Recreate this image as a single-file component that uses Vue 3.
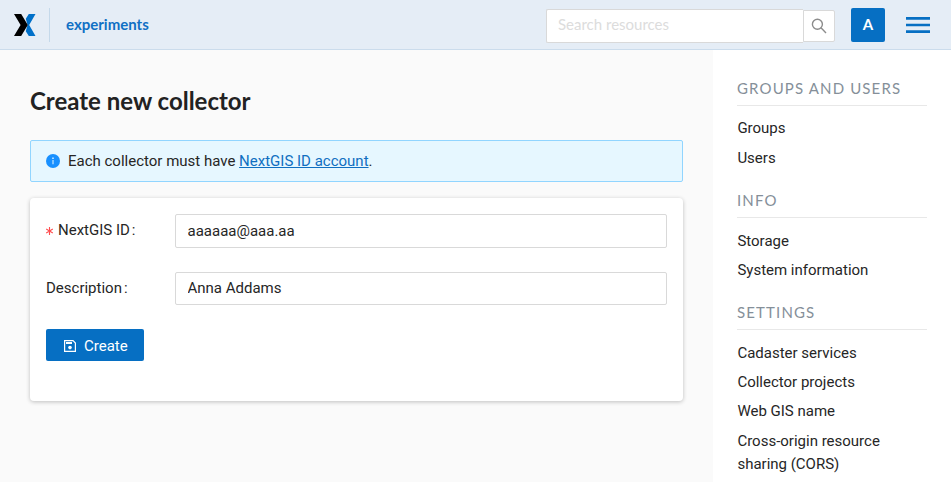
<script setup>
import { ref } from 'vue'

const nextgisId = ref('aaaaaa@aaa.aa')
const description = ref('Anna Addams')
const groups = [
  { title: 'Groups and users', items: ['Groups', 'Users'] },
  { title: 'Info', items: ['Storage', 'System information'] },
  {
    title: 'Settings',
    items: ['Cadaster services', 'Collector projects', 'Web GIS name', 'Cross-origin resource sharing (CORS)'],
  },
]
</script>

<template>
  <div class="page">
    <header class="header">
      <svg class="logo" width="22" height="22" viewBox="0 0 22 22">
        <path d="M14.8 0H21.5L15.2 11 21.5 22H14.8L11.8 17.3 13.5 11 11.8 4.7z" fill="#0070c9" />
        <path d="M0 0h7.2L13.8 11 7.2 22H0L6.6 11z" fill="#000" />
      </svg>
      <div class="divider"></div>
      <a class="site">experiments</a>
      <div class="search">
        <input class="search-input" placeholder="Search resources" />
        <button class="search-button">
          <svg width="16" height="16" viewBox="0 0 16 16" fill="none" stroke="#8c8c8c" stroke-width="1.4">
            <circle cx="6.4" cy="6.2" r="5" />
            <path d="M10 9.8L15 15" />
          </svg>
        </button>
      </div>
      <div class="avatar">A</div>
      <svg class="menu" width="24" height="16" viewBox="0 0 24 16" fill="#066fc3">
        <path d="M0 0h24v2.67H0zM0 6.67h24v2.67H0zM0 13.33h24V16H0z" />
      </svg>
    </header>
    <div class="body">
      <main class="main">
        <h1>Create new collector</h1>
        <div class="alert">
          <svg width="14" height="14" viewBox="0 0 14 14">
            <circle cx="7" cy="7" r="7" fill="#1890ff" />
            <path d="M6.5 6h1v4.3h-1zM6.3 3.6h1.4V5H6.3z" fill="#e6f7ff" />
          </svg>
          <span class="message">Each collector must have <a>NextGIS ID account</a>.</span>
        </div>
        <form class="card" @submit.prevent>
          <div class="row first">
            <label>
              <svg class="required" width="8" height="8" viewBox="0 0 8 8" stroke="#ff4d4f" stroke-width="1.1">
                <path d="M3.5 0v8M.2 2l6.6 4M6.8 2L.2 6" />
              </svg>
              NextGIS ID<span class="colon">:</span>
            </label>
            <input v-model="nextgisId" />
          </div>
          <div class="row second">
            <label>Description<span class="colon">:</span></label>
            <input v-model="description" />
          </div>
          <button class="create">
            <svg width="12" height="12" viewBox="0 0 12 12" fill="none" stroke="#fff" stroke-width="1.2">
              <path d="M.6.6h8.4l2.4 2.4v8.4H.6z" />
              <path d="M2 3h6" stroke-width="2" />
              <circle cx="6" cy="7.6" r="1.8" fill="#fff" stroke="none" />
            </svg>
            <span>Create</span>
          </button>
        </form>
      </main>
      <aside class="sidebar">
        <section v-for="group in groups" :key="group.title">
          <h2>{{ group.title }}</h2>
          <a v-for="item in group.items" :key="item">{{ item }}</a>
        </section>
      </aside>
    </div>
  </div>
</template>

<style>
body {
  background: #fafafa;
}
</style>

<style scoped>
* {
  box-sizing: border-box;
}
.page {
  height: 482px;
  overflow: hidden;
  display: flex;
  flex-direction: column;
  font: 15px/23.57px Roboto, sans-serif;
  color: #262626;
}
.header {
  flex: none;
  height: 50px;
  display: flex;
  align-items: center;
  padding: 0 21px 0 14px;
  background: #e5edf6;
  border-bottom: 1px solid #cbdcec;
}
.logo {
  margin-top: 1px;
}
.divider {
  width: 1px;
  height: 34px;
  margin: 0 16px 0 13px;
  background: #c5d9ea;
}
.site {
  margin-bottom: 2px;
  font: 700 15px/24px Lato, sans-serif;
  color: #1070c4;
}
.search {
  display: flex;
  align-items: center;
  margin-left: auto;
  margin-top: 2px;
}
.search-input {
  width: 257px;
  height: 34px;
  padding: 0 11px 4px;
  font: 15px/24px Lato, sans-serif;
  border: 1px solid #d9d9d9;
  border-right: 0;
  border-radius: 2px 0 0 2px;
  outline: none;
}
.search-input::placeholder {
  color: #dcdcdc;
}
.search-button {
  width: 32px;
  height: 32px;
  padding: 0 1px 0 0;
  display: flex;
  align-items: center;
  justify-content: center;
  background: #fff;
  border: 1px solid #d9d9d9;
  border-radius: 0 2px 2px 0;
}
.avatar {
  width: 34px;
  height: 34px;
  margin: 0 21px 0 16px;
  font: 700 15px/33px Lato, sans-serif;
  text-align: center;
  color: #fff;
  background: #066fc3;
  border-radius: 2px;
}
.body {
  flex: 1;
  min-height: 0;
  display: flex;
}
.main {
  flex: 1;
  padding: 35px 30px 0;
}
h1 {
  margin: 0 0 23px;
  font: 700 24px/32px Lato, sans-serif;
  color: #222;
}
.alert {
  height: 42px;
  display: flex;
  align-items: center;
  gap: 8px;
  padding: 0 15px;
  background: #e6f7ff;
  border: 1px solid #91d5ff;
  border-radius: 2px;
}
.message {
  padding-top: 1px;
}
.alert a {
  color: #106fc1;
  text-decoration: underline;
}
.card {
  height: 203px;
  margin-top: 16px;
  padding: 16px;
  background: #fff;
  border-radius: 4px;
  box-shadow: 0 1px 4px rgba(0, 0, 0, 0.24);
}
.row {
  display: flex;
  margin-bottom: 24px;
}
.row label {
  width: 129px;
  height: 33px;
  display: flex;
  align-items: center;
}
.required {
  margin: 0 4px 0 0;
}
.colon {
  margin-left: 2px;
}
.row input {
  flex: 1;
  min-width: 0;
  padding: 0 11.5px;
  font: inherit;
  color: inherit;
  border: 1px solid #d9d9d9;
  border-radius: 2px;
  outline: none;
}
.first input {
  height: 34px;
}
.second input {
  height: 33px;
  padding-bottom: 1px;
}
.create {
  width: 98px;
  height: 32px;
  display: flex;
  align-items: center;
  gap: 8px;
  padding: 1px 0 0 18px;
  font: inherit;
  line-height: 24px;
  color: #fff;
  background: #066fc3;
  border: 0;
  border-radius: 2px;
}
.create span {
  padding-top: 1px;
}
.sidebar {
  width: 238px;
  padding: 26px 24px 0;
  background: #fff;
}
section {
  margin-bottom: 16.2px;
}
h2 {
  height: 30px;
  margin: 0 0 8.4px;
  font: 400 15px/24px Lato, sans-serif;
  letter-spacing: 1.14px;
  text-transform: uppercase;
  color: #858f99;
  border-bottom: 1px solid #e8e8e8;
}
section + section h2 {
  margin-top: -1px;
}
section a {
  display: block;
  padding: 3px 0 2.9px 0.4px;
  line-height: 23.4px;
}
</style>
